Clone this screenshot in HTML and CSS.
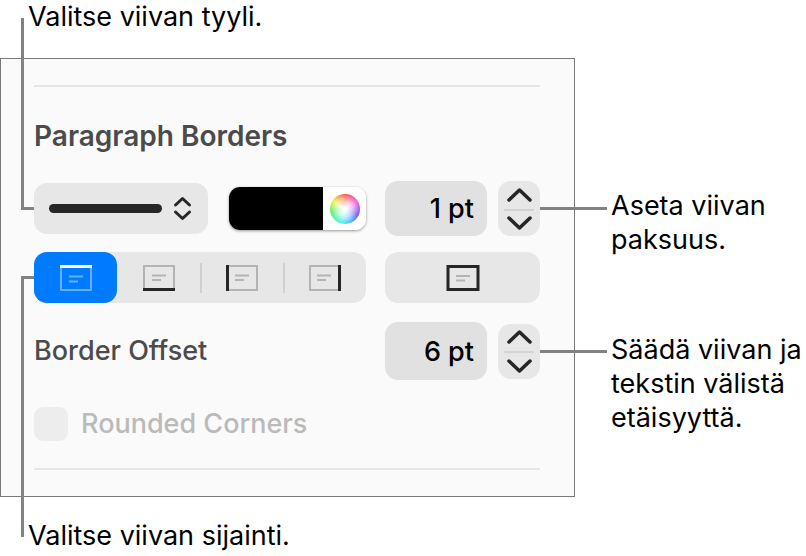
FILE: index.html
```html
<!DOCTYPE html>
<html lang="fi">
<head>
<meta charset="UTF-8">
<meta name="viewport" content="width=device-width, initial-scale=1.0">
<title>Paragraph Borders</title>
<link rel="stylesheet" href="styles.css">
</head>
<body>
  <p class="callout callout-top">Valitse viivan tyyli.</p>

  <div class="figure">
    <section class="panel" lang="en">
      <hr class="rule">
      <h2 class="title">Paragraph Borders</h2>

      <div class="row row-style">
        <div class="pair">
          <div class="style-picker">
            <select class="style-select" aria-label="Line style"><option aria-label="Solid"></option></select>
            <svg class="style-icon" width="174" height="51" viewBox="0 0 174 51" fill="none" stroke="#262626" stroke-linecap="round">
              <path d="M19.500 25.500H123.500" stroke-width="9"/>
              <path d="M141.500 22L148.500 15.500L155.500 22M141.500 29L148.500 35.500L155.500 29" stroke-width="3" stroke-linejoin="round"/>
            </svg>
            <span class="leader leader-up"></span>
          </div>
          <div class="color-well">
            <button class="color-swatch" aria-label="Line color"></button>
            <button class="color-more" aria-label="Color wheel"><span class="wheel"></span></button>
          </div>
        </div>
        <div class="amount">
          <input class="field" type="text" value="1 pt" aria-label="Line width">
          <div class="stepper">
            <button class="step" aria-label="Increase width"><svg width="26" height="16" viewBox="0 0 26 16"><path d="M3 13L13.500 3L24 13"/></svg></button>
            <button class="step" aria-label="Decrease width"><svg width="26" height="16" viewBox="0 0 26 16"><path d="M3 3L13.500 13L24 3"/></svg></button>
            <span class="leader leader-right"></span>
          </div>
        </div>
      </div>

      <div class="row row-position">
        <div class="segments">
          <button class="segment selected" aria-label="Top border">
            <svg width="32" height="26" viewBox="0 0 32 26"><rect class="box" x="1" y="1" width="30" height="24"/><path class="lines" d="M9 11.500H23M9 16.500H18"/><path class="edge" d="M0 1.500H32"/></svg>
          </button>
          <button class="segment" aria-label="Bottom border">
            <svg width="32" height="26" viewBox="0 0 32 26"><rect class="box" x="1" y="1" width="30" height="24"/><path class="lines" d="M9 10.500H23M9 15H18"/><path class="edge" d="M0 24.500H32"/></svg>
          </button>
          <button class="segment" aria-label="Left border">
            <svg width="32" height="26" viewBox="0 0 32 26"><rect class="box" x="1" y="1" width="30" height="24"/><path class="lines" d="M9 10.500H23M9 15H18"/><path class="edge" d="M1.500 0V26"/></svg>
          </button>
          <button class="segment" aria-label="Right border">
            <svg width="32" height="26" viewBox="0 0 32 26"><rect class="box" x="1" y="1" width="30" height="24"/><path class="lines" d="M8 10.500H22M8 15H17"/><path class="edge" d="M30.500 0V26"/></svg>
          </button>
          <span class="leader leader-down"></span>
        </div>
        <button class="all-borders" aria-label="All borders">
          <svg width="34" height="26" viewBox="0 0 34 26"><rect class="frame" x="2" y="1.500" width="30" height="23"/><path class="lines" d="M10 11H24M10 15.500H19"/></svg>
        </button>
      </div>

      <div class="row row-offset">
        <label class="label" for="offset">Border Offset</label>
        <div class="amount">
          <input class="field field-tall" id="offset" type="text" value="6 pt">
          <div class="stepper">
            <button class="step" aria-label="Increase offset"><svg width="26" height="16" viewBox="0 0 26 16"><path d="M3 13L13.500 3L24 13"/></svg></button>
            <button class="step" aria-label="Decrease offset"><svg width="26" height="16" viewBox="0 0 26 16"><path d="M3 3L13.500 13L24 3"/></svg></button>
            <span class="leader leader-right"></span>
          </div>
        </div>
      </div>

      <div class="check-row">
        <input class="check" id="rounded" type="checkbox" disabled>
        <label class="check-label" for="rounded">Rounded Corners</label>
      </div>
      <hr class="rule">
    </section>

    <div class="notes">
      <p class="callout">Aseta viivan paksuus.</p>
      <p class="callout">Säädä viivan ja tekstin välistä etäisyyttä.</p>
    </div>
  </div>

  <p class="callout callout-bottom">Valitse viivan sijainti.</p>
</body>
</html>
```

FILE: styles.css
```css
* {
  box-sizing: border-box;
}
body {
  margin: 0;
  background: #fff;
  color: #000;
  font-family: Inter, "Liberation Sans", sans-serif;
  font-size: 27px;
  line-height: 34px;
}
button, input, select {
  margin: 0;
  padding: 0;
  border: none;
  font: inherit;
}
svg {
  display: block;
}

/* callout texts */
.callout {
  margin: 0;
}
.callout-top {
  height: 58px;
  padding-left: 28px;
}
.callout-bottom {
  padding: 22px 0 0 28px;
}
.figure {
  display: grid;
  grid-template-columns: minmax(0, 1fr) 231px;
}
.notes {
  display: flex;
  flex-direction: column;
  gap: 76px;
  padding: 131px 0 0 36px;
}

/* settings panel */
.panel {
  padding: 26px 34px 26px 33px;
  border: 1px solid #78787a;
  background: #fafafa;
}
.rule {
  height: 2px;
  margin: 0;
  border: none;
  background: #e6e6e6;
}
.title {
  margin: 32px 0 28px;
  color: #4b4b4b;
  font-size: 28px;
  font-weight: 600;
}
.row {
  display: grid;
  grid-template-columns: 332fr 155fr;
  gap: 19px;
  align-items: center;
}
.row-position {
  margin: 16px 0 19px;
}
.pair {
  display: grid;
  grid-template-columns: 174fr 137fr;
  gap: 21px;
  align-items: center;
}
.amount {
  display: grid;
  grid-template-columns: minmax(0, 1fr) 42px;
  gap: 11px;
  align-items: center;
}

.style-picker {
  position: relative;
}
.style-select {
  display: block;
  width: 100%;
  height: 51px;
  border-radius: 13px;
  background: #e7e7e7;
  appearance: none;
}
.style-icon {
  position: absolute;
  top: 0;
  right: 0;
  pointer-events: none;
}

.color-well {
  display: flex;
  height: 43px;
  border-radius: 11px;
  overflow: hidden;
  box-shadow: 0 1px 3px rgba(0, 0, 0, 0.4);
}
.color-swatch {
  flex: 1;
  background: #000;
}
.color-more {
  display: grid;
  place-items: center;
  width: 43px;
  background: #fff;
}
.wheel {
  width: 30px;
  height: 30px;
  border-radius: 50%;
  background:
    radial-gradient(circle closest-side, #fff 10%, rgba(255, 255, 255, 0.7) 50%, rgba(255, 255, 255, 0.1) 100%),
    conic-gradient(#ff4030, #f040e0 60deg, #5040f0 115deg, #30a0ff 150deg, #30f0f0 190deg, #40f050 260deg, #f0f030 305deg, #ff4030);
}

.field {
  width: 100%;
  height: 55px;
  padding-right: 13px;
  border-radius: 13px;
  background: #e1e1e1;
  color: #000;
  font-weight: 500;
  text-align: right;
}
.field-tall {
  height: 58px;
}
.stepper {
  position: relative;
  display: grid;
  grid-template-rows: 1fr 1fr;
  height: 55px;
  border-radius: 13px;
  background: #e7e7e7;
}
.step {
  display: grid;
  place-items: center;
  background: none;
}
.step + .step {
  margin: 0 6px;
  border-top: 2px solid #d3d3d3;
}
.step path {
  fill: none;
  stroke: #262626;
  stroke-width: 3.5;
  stroke-linecap: round;
  stroke-linejoin: round;
}

.segments {
  position: relative;
  display: grid;
  grid-template-columns: repeat(4, 1fr);
  height: 51px;
  border-radius: 13px;
  background: #e7e7e7;
}
.segment {
  display: grid;
  place-items: center;
  border-radius: 13px;
  background: none;
}
/* short separators between the unselected segments */
.segment:nth-child(n+3) {
  border-radius: 0;
  background: linear-gradient(#d0d0d0, #d0d0d0) left center / 2px 30px no-repeat;
}
.selected {
  background: #007aff;
}
.box {
  fill: none;
  stroke: #b4b4b4;
  stroke-width: 2;
}
.lines {
  stroke: #b4b4b4;
  stroke-width: 2;
}
.edge {
  stroke: #262626;
  stroke-width: 3;
}
.selected .box, .selected .lines {
  stroke: #66afff;
}
.selected .edge {
  stroke: #fff;
}
.all-borders {
  display: grid;
  place-items: center;
  height: 51px;
  border-radius: 13px;
  background: #e7e7e7;
}
.frame {
  fill: none;
  stroke: #262626;
  stroke-width: 3;
}

.label {
  color: #4b4b4b;
  font-weight: 500;
}
.check-row {
  display: flex;
  align-items: center;
  gap: 13px;
  margin: 27px 0;
}
.check {
  width: 34px;
  height: 34px;
  border-radius: 9px;
  background: #ededed;
  appearance: none;
}
.check-label {
  color: #bababa;
  font-weight: 500;
}

/* leader lines from the controls to their callouts */
.leader {
  position: absolute;
  border: 0 solid #828282;
}
.leader-up {
  right: 100%;
  bottom: 24px;
  width: 13px;
  height: 192px;
  border-width: 0 0 3px 3px;
}
.leader-down {
  right: 100%;
  top: 24px;
  width: 13px;
  height: 261px;
  border-width: 3px 0 0 3px;
}
.leader-right {
  left: 100%;
  top: 26px;
  width: 67px;
  border-top-width: 3px;
}
```
